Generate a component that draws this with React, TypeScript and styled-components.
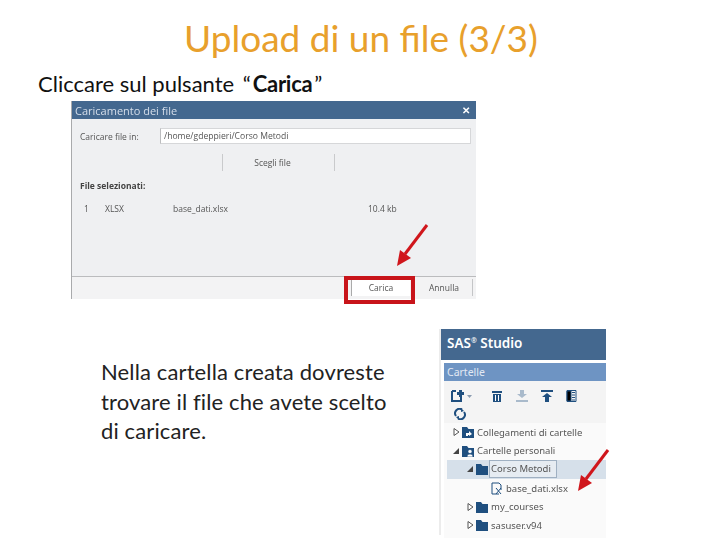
import styled, { createGlobalStyle } from 'styled-components';

const GlobalStyle = createGlobalStyle`
  html, body {
    margin: 0;
    background: #fff;
  }
`;

const FOLDER_PATH = 'M0 1h5l1.500 2H12v9H0z';

function Folder({ mark }: { mark?: 'link' | 'person' }): JSX.Element {
  return (
    <svg width="12" height="12" viewBox="0 0 12 12">
      <path d={FOLDER_PATH} fill="#1f4f7f" />
      {mark === 'link' && <path d="M4 10V7h3V5l3 3-3 2V9H6v1z" fill="#fff" />}
      {mark === 'person' && <path d="M8 4.500a2 2 0 1 1-.01 0zM5 12c0-2 1-3 3-3s3 1 3 3z" fill="#fff" stroke="#1f4f7f" strokeWidth="0.700" />}
    </svg>
  );
}

function Twisty({ open }: { open?: boolean }): JSX.Element {
  return (
    <svg width="7" height="8" viewBox="0 0 7 8">
      {open ? <path d="M6 1v6H0z" fill="#444" /> : <path d="M1 .5 6 4 1 7.500z" fill="#fff" stroke="#555" />}
    </svg>
  );
}

function Arrow(): JSX.Element {
  return (
    <svg width="34" height="46" viewBox="0 0 34 46">
      <path d="M31 1 9 30" stroke="#d0161c" strokeWidth="3" fill="none" />
      <path d="M1 42 4 26 15 34z" fill="#d0161c" />
    </svg>
  );
}

function TreeRow(props: { depth: number; label: string; icon: JSX.Element; twisty?: 'open' | 'closed'; selected?: boolean }): JSX.Element {
  const { depth, label, icon, twisty, selected } = props;
  return (
    <Row $depth={depth} $selected={selected}>
      <TwistySlot>{twisty && <Twisty open={twisty === 'open'} />}</TwistySlot>
      {icon}
      <RowLabel $selected={selected}>{label}</RowLabel>
    </Row>
  );
}

export default function App(): JSX.Element {
  return (
    <Slide>
      <GlobalStyle />
      <Title>Upload di un file (3/3)</Title>
      <Lead>
        Cliccare sul pulsante <Quote>“</Quote>
        <b>Carica</b>”
      </Lead>

      <Dialog>
        <DialogHeader>
          Caricamento dei file
          <CloseMark>✕</CloseMark>
        </DialogHeader>
        <DialogBody>
          <FieldRow>
            <FieldLabel>Caricare file in:</FieldLabel>
            <PathInput>/home/gdeppieri/Corso Metodi</PathInput>
          </FieldRow>
          <ChooseButton>Scegli file</ChooseButton>
          <SectionLabel>File selezionati:</SectionLabel>
          <FileRow>
            <span>1</span>
            <span>XLSX</span>
            <span>base_dati.xlsx</span>
            <span>10.4 kb</span>
          </FileRow>
        </DialogBody>
        <DialogFooter>
          <PrimaryButton>Carica</PrimaryButton>
          <SecondaryButton>Annulla</SecondaryButton>
        </DialogFooter>
        <Highlight />
        <DialogArrow>
          <Arrow />
        </DialogArrow>
      </Dialog>

      <Lower>
        <Note>
          Nella cartella creata dovreste
          <br />
          trovare il file che avete scelto
          <br />
          di caricare.
        </Note>
        <Studio>
          <StudioHeader>
            SAS<sup>®</sup> Studio
          </StudioHeader>
          <PanelTitle>Cartelle</PanelTitle>
          <Toolbar>
            <ToolRow>
              <svg width="27" height="12" viewBox="0 0 27 12">
                <path d="M1 1h4M1 1v10h9V7" stroke="#1f4f7f" strokeWidth="2" fill="none" />
                <path d="M8 0h3v2h2v3h-2v2H8V5H6V2h2z" fill="#1f4f7f" />
                <path d="M16 5h5l-2.500 3z" fill="#8a9bb0" />
              </svg>
              <svg width="12" height="12" viewBox="0 0 12 12">
                <path d="M1 1h10v2H1zM2 4h8v8H2z" fill="#1f4f7f" />
                <path d="M4.500 5v6M7.500 5v6" stroke="#fff" />
              </svg>
              <svg width="12" height="12" viewBox="0 0 12 12">
                <path d="M4 0h4v4h3L6 8 1 4h3zM0 10h12v2H0z" fill="#a9bacb" />
              </svg>
              <svg width="12" height="12" viewBox="0 0 12 12">
                <path d="M0 0h12v2H0zM6 3l5 4H8v5H4V7H1z" fill="#1f4f7f" />
              </svg>
              <svg width="11" height="12" viewBox="0 0 11 12">
                <path d="M1 .5h9v11H1z" fill="none" stroke="#1f4f7f" />
                <path d="M1 1h4v10H1zM6 2.500h3M6 5h3M6 7.500h3M6 10h3" stroke="#1f4f7f" />
              </svg>
            </ToolRow>
            <RefreshIcon width="12" height="12" viewBox="0 0 12 12">
              <path d="M2 8A4.500 4.500 0 0 1 8 1.500M10 4a4.500 4.500 0 0 1-6 6.500" stroke="#1f4f7f" strokeWidth="2" fill="none" />
              <path d="M7 0l3 3-3 1zM5 12l-3-3 3-1z" fill="#1f4f7f" />
            </RefreshIcon>
          </Toolbar>
          <Tree>
            <TreeRow depth={0} label="Collegamenti di cartelle" twisty="closed" icon={<Folder mark="link" />} />
            <TreeRow depth={0} label="Cartelle personali" twisty="open" icon={<Folder mark="person" />} />
            <TreeRow depth={1} label="Corso Metodi" twisty="open" icon={<Folder />} selected />
            <TreeRow
              depth={2}
              label="base_dati.xlsx"
              icon={
                <svg width="13" height="13" viewBox="0 0 13 13">
                  <path d="M9 12H2V1h7l2 2v5" stroke="#1f4f7f" fill="none" />
                  <path d="M6 6l5 6M11 6l-5 6" stroke="#1f4f7f" />
                </svg>
              }
            />
            <TreeRow depth={1} label="my_courses" twisty="closed" icon={<Folder />} />
            <TreeRow depth={1} label="sasuser.v94" twisty="closed" icon={<Folder />} />
          </Tree>
          <TreeArrow>
            <Arrow />
          </TreeArrow>
        </Studio>
      </Lower>
    </Slide>
  );
}

const Slide = styled.div`
  box-sizing: border-box;
  position: relative;
  width: 720px;
  height: 540px;
  padding-top: 15px;
  overflow: hidden;
  background: #fff;
  font-family: Lato, 'Open Sans', sans-serif;
`;

const Title = styled.h1`
  margin: 0;
  padding-left: 2px;
  font-weight: 400;
  font-size: 37px;
  line-height: 46px;
  text-align: center;
  color: #e8a02c;
`;

const Lead = styled.p`
  margin: 10px 0 0 38px;
  font-size: 22px;
  line-height: 25px;
  color: #111;
  b {
    margin: 0 2px;
    font-weight: 700;
    letter-spacing: -0.300px;
  }
`;

const Quote = styled.span`
  margin-left: 3px;
`;

const Dialog = styled.div`
  position: relative;
  box-sizing: border-box;
  width: 405px;
  height: 198px;
  margin: 5px 0 0 71px;
  display: flex;
  flex-direction: column;
  background: #eff0f2;
  border-left: 1px solid #a9aaac;
  font-family: 'Open Sans', sans-serif;
  color: #555;
`;

const DialogHeader = styled.div`
  display: flex;
  justify-content: space-between;
  align-items: center;
  height: 18px;
  padding: 0 6px 0 3px;
  background: #44688f;
  color: #d5deea;
  font-size: 11px;
  filter: blur(0.400px);
`;

const CloseMark = styled.span`
  font-size: 10px;
  font-weight: 700;
  color: #fff;
`;

const DialogBody = styled.div`
  flex: 1;
  padding: 9px 5px 0 8px;
  font-size: 8.500px;
  filter: blur(0.400px);
`;

const FieldRow = styled.div`
  display: flex;
  align-items: center;
`;

const FieldLabel = styled.span`
  width: 80px;
`;

const PathInput = styled.div`
  box-sizing: border-box;
  width: 311px;
  height: 16px;
  padding-left: 3px;
  line-height: 15px;
  background: #fff;
  border: 1px solid #d6d7d9;
  border-left-color: #bcbdbf;
  font-size: 8.600px;
`;

const ChooseButton = styled.div`
  box-sizing: border-box;
  width: 113px;
  height: 17px;
  margin: 10px 0 0 142px;
  padding-right: 12px;
  line-height: 18px;
  text-align: center;
  border: solid #c9cacc;
  border-width: 0 1px;
`;

const SectionLabel = styled.div`
  margin-top: 9px;
  font-weight: 700;
  color: #444;
`;

const FileRow = styled.div`
  display: grid;
  grid-template-columns: 21px 68px 195px auto;
  justify-content: start;
  margin: 12px 0 0 4px;
  line-height: 12px;
`;

const DialogFooter = styled.div`
  display: flex;
  align-items: flex-end;
  justify-content: flex-end;
  box-sizing: border-box;
  height: 23px;
  padding: 0 3px 3px 0;
  border-top: 1px solid #bbbcbe;
  background: #f3f3f4;
  font-size: 8.500px;
  filter: blur(0.400px);
`;

const PrimaryButton = styled.div`
  box-sizing: border-box;
  width: 59px;
  height: 17px;
  line-height: 17px;
  text-align: center;
  background: #fff;
  border-left: 1px solid #aaa;
`;

const SecondaryButton = styled(PrimaryButton)`
  width: 57px;
  margin-left: 6px;
  background: #f3f3f4;
  border-left: 0;
  border-right: 1px solid #c4c5c7;
`;

const Highlight = styled.div`
  position: absolute;
  left: 272px;
  top: 175px;
  width: 71px;
  height: 28px;
  box-sizing: border-box;
  border: 4px solid #c8141a;
`;

const DialogArrow = styled.div`
  position: absolute;
  left: 324px;
  top: 123px;
  line-height: 0;
`;

const Lower = styled.div`
  display: flex;
  align-items: flex-start;
  margin-top: 30px;
`;

const Note = styled.p`
  width: 340px;
  margin: 28px 0 0 101px;
  font-size: 22px;
  line-height: 29.500px;
  letter-spacing: 0.130px;
  color: #222;
`;

const Studio = styled.div`
  position: relative;
  width: 165px;
  height: 206px;
  box-shadow: -2px 0 0 #ececec;
  font-family: 'Noto Sans', sans-serif;
`;

const StudioHeader = styled.div`
  height: 31px;
  padding-left: 6px;
  line-height: 28px;
  background: #44688f;
  color: #fff;
  font-size: 13.500px;
  font-weight: 600;
  sup {
    font-size: 7px;
    line-height: 0;
  }
`;

const PanelTitle = styled.div`
  height: 18px;
  margin: 3px 0 0 3px;
  padding-left: 3px;
  line-height: 18px;
  background: #6e94c3;
  color: #e2e9f3;
  font-size: 10.500px;
`;

const Toolbar = styled.div`
  display: flex;
  flex-direction: column;
  gap: 6px;
  height: 42px;
  box-sizing: border-box;
  margin-left: 3px;
  padding: 9px 0 0 7px;
  background: #f4f4f4;
`;

const ToolRow = styled.div`
  display: flex;
  align-items: center;
  gap: 13px;
  height: 12px;
`;

const RefreshIcon = styled.svg`
  margin-left: 3px;
`;

const Tree = styled.div`
  margin-left: 3px;
  background: #fafafa;
  height: 115px;
  overflow: hidden;
  filter: blur(0.400px);
`;

const Row = styled.div<{ $depth: number; $selected?: boolean }>`
  display: flex;
  align-items: center;
  gap: 2px;
  height: 18.600px;
  padding-left: ${(p) => 9 - (p.$selected ? 3 : 0) + p.$depth * 14}px;
  margin-left: ${(p) => (p.$selected ? 3 : 0)}px;
  background: ${(p) => (p.$selected ? '#d6e0ea' : 'transparent')};
`;

const TwistySlot = styled.span`
  display: flex;
  width: 7px;
`;

const RowLabel = styled.span<{ $selected?: boolean }>`
  margin-left: 1px;
  font-size: 9.500px;
  color: #555;
  ${(p) => p.$selected && 'margin-left: -1px; padding: 0 5px 0 1px; border: 1px solid #9fb0c2; line-height: 16px; background: #e6ecf2;'}
`;

const TreeArrow = styled.div`
  position: absolute;
  left: 136px;
  top: 120px;
  line-height: 0;
`;
